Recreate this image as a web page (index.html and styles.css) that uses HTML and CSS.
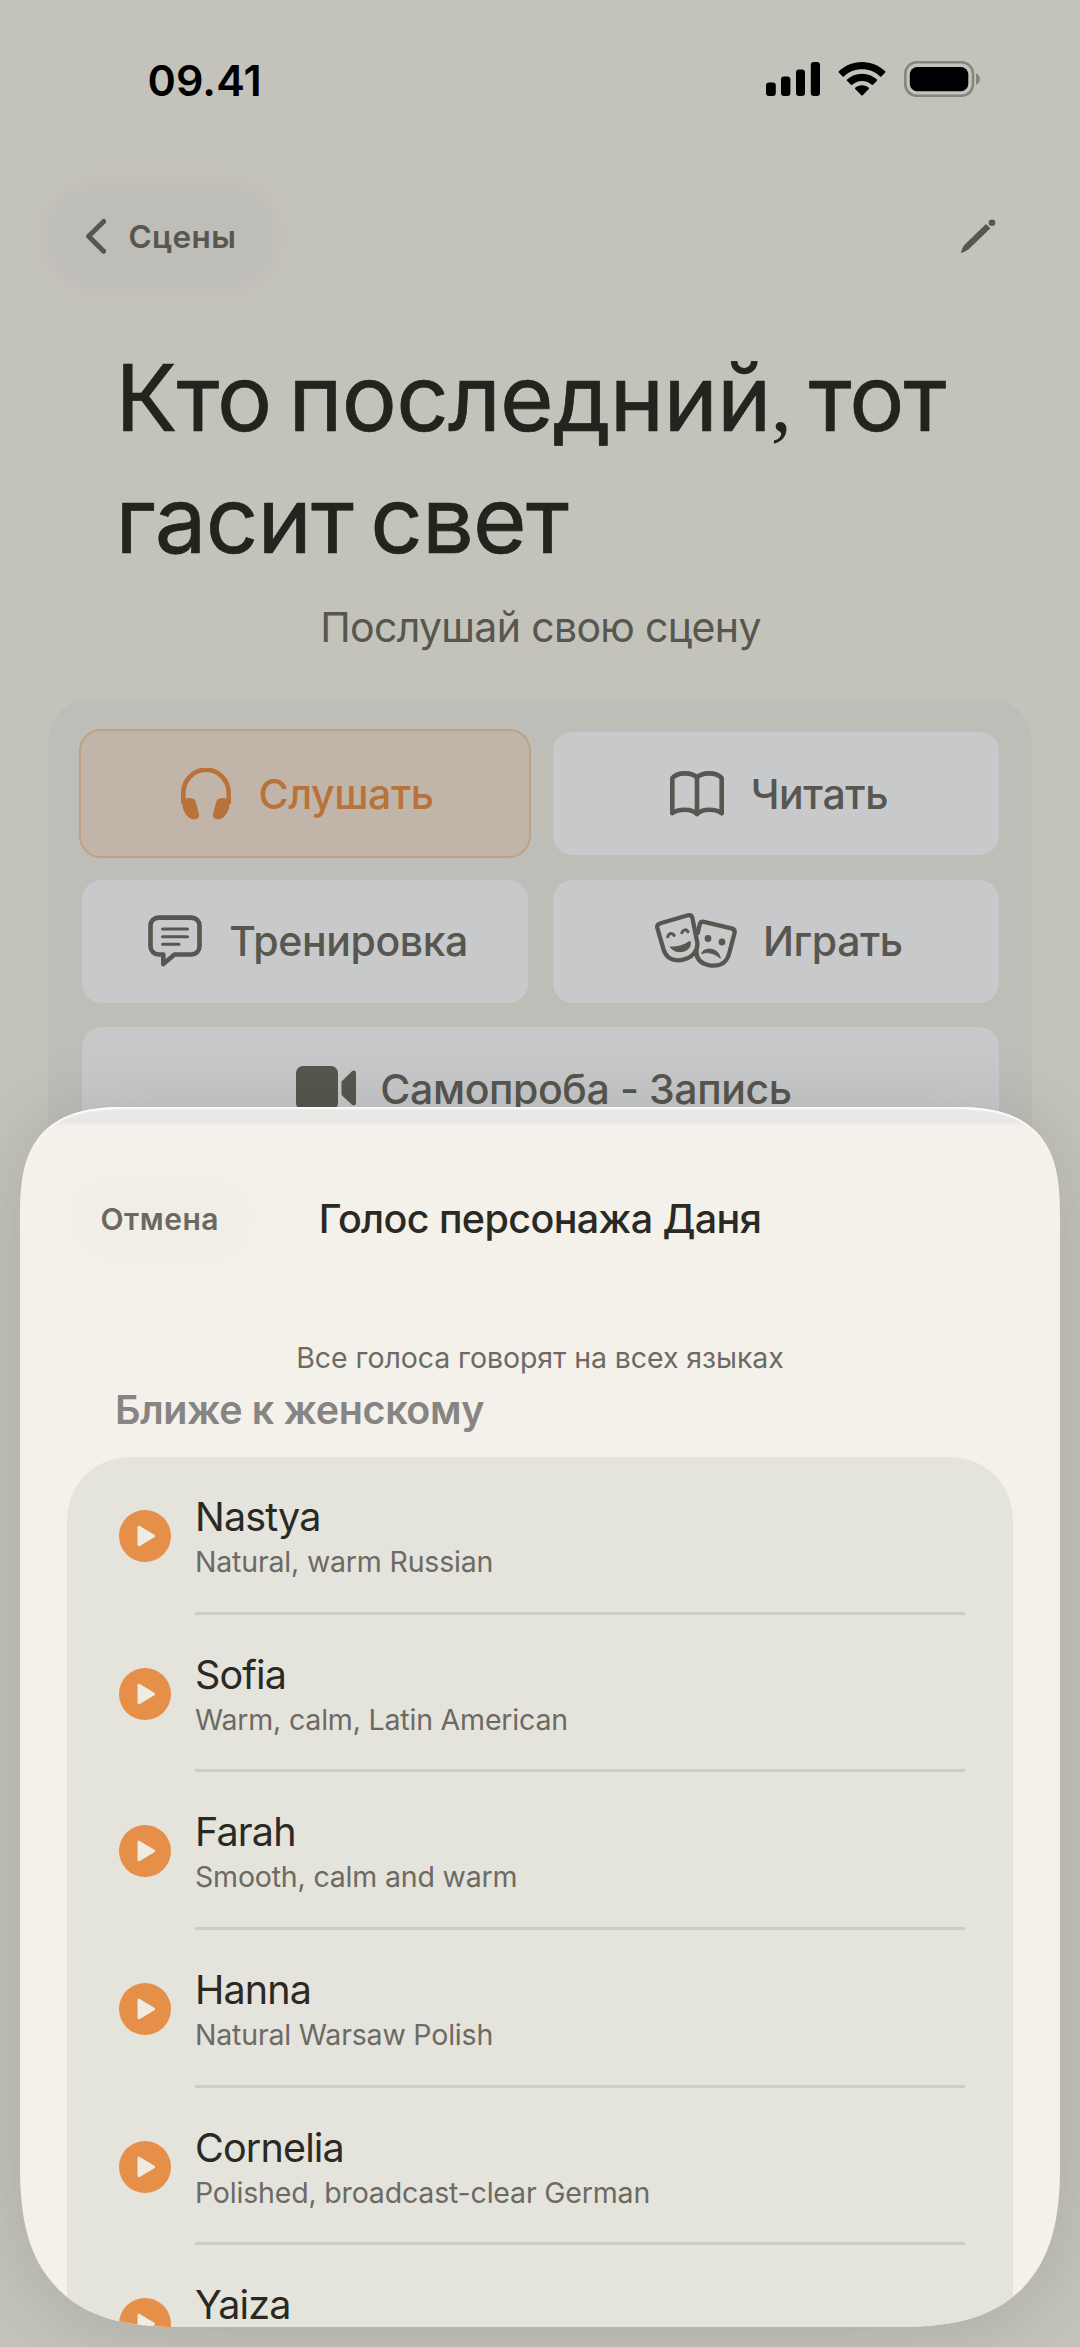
FILE: index.html
```html
<!DOCTYPE html>
<html lang="ru">
<head>
<meta charset="utf-8">
<title>Голос персонажа</title>
<link rel="stylesheet" href="styles.css">
</head>
<body>
<svg class="defs" width="0" height="0" aria-hidden="true">
  <symbol id="play" viewBox="0 0 52 52">
    <circle cx="26" cy="26" r="26" fill="#e58f48"/>
    <path d="M20 17.2v17.6L34.6 26z" fill="#f0ece2" stroke="#f0ece2" stroke-width="3" stroke-linejoin="round"/>
  </symbol>
</svg>
<main class="screen">
  <header class="status">
    <span class="time">09.41</span>
    <div class="status-icons">
      <svg width="54" height="34" viewBox="0 0 54 34">
        <rect x="0" y="20.5" width="9.8" height="13.5" rx="3"/>
        <rect x="15" y="14.5" width="9.4" height="19.5" rx="3"/>
        <rect x="30" y="7.5" width="9" height="26.5" rx="3"/>
        <rect x="44.8" y="0" width="9.2" height="34" rx="3"/>
      </svg>
      <svg class="wifi" width="48" height="35" viewBox="0 0 48 35">
        <path d="M24 0C33.200 0 41 3.500 47.200 9.300Q47.700 9.900 47.200 10.500L43.300 14.400Q42.700 14.900 42.100 14.400C37 9.700 31 7.200 24 7.200S11 9.700 5.900 14.400Q5.300 14.900 4.700 14.400L.8 10.500Q.3 9.900 .8 9.300C7 3.500 14.800 0 24 0z"/>
        <path d="M24 11.700C30 11.700 35 14 39 17.500Q39.600 18.200 39 18.800L35 22.700Q34.400 23.200 33.800 22.700C31 20.200 28 18.900 24 18.900S17 20.200 14.200 22.700Q13.600 23.200 13 22.700L9 18.800Q8.400 18.200 9 17.500C13 14 18 11.700 24 11.700z"/>
        <path d="M24 23.200C26.800 23.200 29 24.200 30.800 25.700Q31.400 26.400 30.800 27L24.700 33.300Q24 33.900 23.300 33.300L17.200 27Q16.600 26.400 17.200 25.700C19 24.200 21.200 23.200 24 23.200z"/>
      </svg>
      <svg class="battery" width="77" height="36" viewBox="0 0 77 36">
        <rect x="1.300" y="1.300" width="67.700" height="33.400" rx="11.500" fill="none" stroke="#85847d" stroke-width="2.500"/>
        <rect x="5.800" y="6" width="58.500" height="24.200" rx="7.500"/>
        <path d="M72 12.500c5.200 1 5.200 10.200 0 11.200z" fill="#85847d"/>
      </svg>
    </div>
  </header>

  <nav class="nav">
    <a class="back">
      <svg width="20" height="35" viewBox="0 0 20 35"><path d="M17.700 2.500L2.600 17.300l15.100 14.900" fill="none" stroke="#57564f" stroke-width="5" stroke-linecap="round" stroke-linejoin="round"/></svg>
      <span>Сцены</span>
    </a>
    <svg class="pencil" width="35" height="34" viewBox="0 0 35 34" fill="#57564f">
      <circle cx="31" cy="3.700" r="3.300"/>
      <path d="M25 4.900L29.400 9.300L7.400 30.600Q3 33.200 .6 33.900Q-.1 33.900 .2 33Q1 29 3.300 26z"/>
    </svg>
  </nav>

  <h1 class="title">Кто последний<span class="comma">,</span> тот гасит свет</h1>
  <p class="subtitle">Послушай свою сцену</p>

  <section class="modes">
    <button class="mode active">
      <svg width="50" height="52" viewBox="0 0 50 52"><path d="M2.300 36V25a22.700 23.300 0 0 1 45.400 0v11" fill="none" stroke="currentColor" stroke-width="4.600"/><path d="M1.400 33.500C1.800 29.500 13.500 28.200 14.500 33L18 46C19 51 13 52.500 9.500 50.500C4 47.500 .9 40 1.400 33.500zM48.600 33.500C48.200 29.500 36.500 28.200 35.500 33L32 46C31 51 37 52.500 40.500 50.500C46 47.500 49.100 40 48.600 33.500z" fill="currentColor"/></svg>
      <span>Слушать</span>
    </button>
    <button class="mode">
      <svg width="54" height="46" viewBox="0 0 54 46" fill="none" stroke="currentColor" stroke-width="4.600" stroke-linejoin="round"><path d="M27 6.800C23 1.200 7.500 .5 2.300 7.200V42.300C8.500 37.500 21.500 37.500 27 43C32.500 37.500 45.500 37.500 51.700 42.300V7.200C46.500 .5 31 1.200 27 6.800zM27 6.800V43"/></svg>
      <span>Читать</span>
    </button>
    <button class="mode">
      <svg width="54" height="52" viewBox="0 0 54 52" fill="none" stroke="currentColor" stroke-linejoin="round" stroke-linecap="round"><path d="M10.500 2.600H43.500A8 8 0 0 1 51.500 10.600V31.500A8 8 0 0 1 43.500 39.500H26.500L15.300 49V39.500H10.500A8 8 0 0 1 2.500 31.500V10.600A8 8 0 0 1 10.500 2.600z" stroke-width="4.600"/><path d="M14.500 14H39.500M14.500 21.700H39.500M14.500 29.300H31" stroke-width="3"/></svg>
      <span>Тренировка</span>
    </button>
    <button class="mode masks">
      <svg width="82" height="56" viewBox="0 0 82 56" fill="none" stroke="currentColor" stroke-width="4.300" stroke-linejoin="round" stroke-linecap="round">
        <path d="M5.500 10.200L33 2.300Q36.400 1.600 37.300 4.700L42.200 29C43.500 38 37 44.500 28.500 46.600C19 48.800 11.500 45.500 8.700 37L2.300 14.800Q1.600 11.400 5.500 10.200z"/>
        <path d="M42.700 20L44.700 11.500Q45.500 8.200 49 8.800L76.500 15.400Q80.400 16.500 79.500 20.300L74 41C71.500 50 64.500 54 54.500 52.300C46 50.800 41 46 41.500 38"/>
        <path d="M12.700 23.800Q15 18 19.200 22.400M26.800 19.800Q29.700 14.500 33 18.700" stroke-width="3"/>
        <path d="M15.500 34.200Q26 34.500 35 28.300C36.500 33.500 33 37.300 28 38.300C22.500 39.300 18 38 15.500 34.200z" fill="currentColor" stroke-width="1"/>
        <circle cx="53" cy="25.500" r="3.400" fill="currentColor" stroke="none"/><circle cx="67" cy="29" r="3.400" fill="currentColor" stroke="none"/>
        <path d="M46.800 40.500C48.500 33.500 64 34.500 65.200 45.300C61 41 53.500 38 46.800 40.500z" fill="currentColor" stroke-width="1"/>
      </svg>
      <span>Играть</span>
    </button>
    <button class="mode wide">
      <svg width="60" height="49" viewBox="0 0 60 49" fill="currentColor"><rect width="42" height="44" y="2" rx="7"/><path d="M45.500 17.500L56 7.300Q60 5 60 10V38Q60 43 56 40.700L45.500 31z"/></svg>
      <span>Самопроба - Запись</span>
    </button>
  </section>
</main>

<section class="sheet">
  <header class="sheet-head">
    <a class="cancel"><span>Отмена</span></a>
    <h2 class="sheet-title">Голос персонажа Даня</h2>
  </header>
  <p class="note">Все голоса говорят на всех языках</p>
  <h3 class="group">Ближе к женскому</h3>
  <ul class="voices">
    <li class="voice"><svg class="play"><use href="#play"/></svg><div class="info"><div class="name">Nastya</div><div class="desc">Natural, warm Russian</div></div></li>
    <li class="voice"><svg class="play"><use href="#play"/></svg><div class="info"><div class="name">Sofia</div><div class="desc">Warm, calm, Latin American</div></div></li>
    <li class="voice"><svg class="play"><use href="#play"/></svg><div class="info"><div class="name">Farah</div><div class="desc">Smooth, calm and warm</div></div></li>
    <li class="voice"><svg class="play"><use href="#play"/></svg><div class="info"><div class="name">Hanna</div><div class="desc">Natural Warsaw Polish</div></div></li>
    <li class="voice"><svg class="play"><use href="#play"/></svg><div class="info"><div class="name">Cornelia</div><div class="desc">Polished, broadcast-clear German</div></div></li>
    <li class="voice"><svg class="play"><use href="#play"/></svg><div class="info"><div class="name">Yaiza</div></div></li>
  </ul>
</section>
</body>
</html>
```
FILE: styles.css
```css
* { box-sizing: border-box; margin: 0; padding: 0; }
body {
  position: relative;
  width: 1080px;
  height: 2347px;
  overflow: hidden;
  background: #c4c3bb;
  font-family: Inter, "Liberation Sans", sans-serif;
  color: #57564f;
}
svg { display: block; flex: none; }
.defs { position: absolute; }
button { border: 0; background: none; font: inherit; color: inherit; }
.screen { height: 2347px; overflow: hidden; }

/* status bar */
.status {
  height: 160px;
  padding: 0 99px 0 147.5px;
  display: flex;
  align-items: center;
  justify-content: space-between;
}
.time { font-size: 43px; font-weight: 600; letter-spacing: .1px; color: #000; }
.status-icons { display: flex; align-items: center; padding-bottom: 2px; }
.wifi { margin-left: 18px; }
.battery { margin-left: 18px; }

/* navigation row */
.nav {
  height: 177px;
  padding: 20px 84px 0 40px;
  display: flex;
  align-items: flex-start;
  justify-content: space-between;
}
.back {
  width: 243px;
  height: 113px;
  padding-left: 46px;
  display: flex;
  align-items: center;
  gap: 22.5px;
  font-size: 31.5px;
  font-weight: 600;
  letter-spacing: .4px;
  position: relative;
}
.back::before, .cancel::before {
  content: "";
  position: absolute;
  inset: 12px;
  border-radius: 60px;
  background: #bfbdb8;
  box-shadow: 0 0 18px 10px #bfbdb8;
}
.back > * { position: relative; }
.pencil { margin-top: 39px; }

.title {
  height: 244px;
  padding-left: 115.5px;
  width: 1000px;
  font-size: 92px;
  font-weight: 400;
  line-height: 122px;
  letter-spacing: -.8px;
  word-spacing: -8px;
  color: #24231e;
  -webkit-text-stroke: .7px #24231e;
}
.comma { font-family: "Liberation Serif", serif; font-size: 84px; font-weight: 400; line-height: 0; letter-spacing: 0; -webkit-text-stroke: 0; }
.subtitle {
  margin-top: 16px;
  line-height: 60px;
  font-size: 41px;
  letter-spacing: -.67px;
  text-align: center;
  padding-left: 1px;
}

/* mode buttons */
.modes {
  margin: 42px 48px 0;
  height: 500px;
  padding: 33px 33px 33px 34px;
  border-radius: 42px;
  background: #bebdb7;
  display: grid;
  grid-template-columns: 1fr 1fr;
  grid-auto-rows: 123px;
  gap: 24.5px;
}
.mode {
  display: flex;
  align-items: center;
  justify-content: center;
  gap: 27px;
  padding-left: 6px;
  border-radius: 20px;
  background: #c8c9cb;
  font-size: 41px;
  font-weight: 500;
  letter-spacing: -.4px;
}
.mode.active {
  background: #c1b5a9;
  color: #b9733a;
  margin: -1px;
  padding-left: 5px;
  outline: 2.5px solid #bea182;
}
.mode.masks { gap: 26px; }
.mode.wide { grid-column: 1 / -1; gap: 24px; padding-left: 7px; }

/* bottom sheet over the dimmed screen */
.sheet {
  position: absolute;
  left: 20px;
  top: 1107px;
  width: 1040px;
  height: 1220px;
  overflow: hidden;
  border-radius: 112px 112px 165px 165px;
  corner-shape: superellipse(1.5) superellipse(1.5) superellipse(1.4) superellipse(1.4);
  background: linear-gradient(#e9e8e7 0, #e7e7e6 15px, #f4f1ea 19px, #f4f1ea 100%);
  box-shadow: 0 4px 80px rgba(0, 0, 0, .13), inset 0 3px 2px -1px #fff;
}
.sheet-head {
  height: 230px;
  padding: 0 45px 7px;
  display: grid;
  grid-template-columns: 1fr auto 1fr;
  align-items: center;
}
.cancel {
  position: relative;
  width: 192px;
  height: 92px;
  display: flex;
  align-items: center;
  padding-left: 35.500px;
  font-size: 30px;
  font-weight: 600;
  letter-spacing: .5px;
  color: #6b6861;
}
.cancel::before { background: #f1eee8; box-shadow: 0 0 18px 10px #f1eee8; }
.cancel > span { position: relative; }
.sheet-title { font-size: 39.5px; font-weight: 500; letter-spacing: -.62px; color: #2a2924; }
.note {
  line-height: 41px;
  font-size: 28.5px;
  letter-spacing: -.08px;
  text-align: center;
  color: #6d6a64;
}
.group {
  padding-left: 95px;
  margin-top: 6.500px;
  line-height: 50px;
  font-size: 39.5px;
  font-weight: 600;
  letter-spacing: -.38px;
  color: #868583;
}
.voices {
  list-style: none;
  margin: 22.5px 47px 0;
  height: 1000px;
  border-radius: 66px;
  corner-shape: superellipse(1.1);
  background: #e4e3dc;
}
.voice {
  display: flex;
  align-items: center;
  height: 157.7px;
  padding: 0 48px 0 52px;
  gap: 24px;
}
.play { width: 52px; height: 52px; }
.info {
  flex: 1;
  height: 100%;
  padding-top: 35px;
  border-bottom: 3px solid #cdccc6;
}
.name {
  line-height: 50px;
  font-size: 39.5px;
  letter-spacing: -.85px;
  color: #2a2924;
}
.desc {
  line-height: 40px;
  font-size: 28.5px;
  letter-spacing: -.18px;
  color: #6d6a64;
}
```
